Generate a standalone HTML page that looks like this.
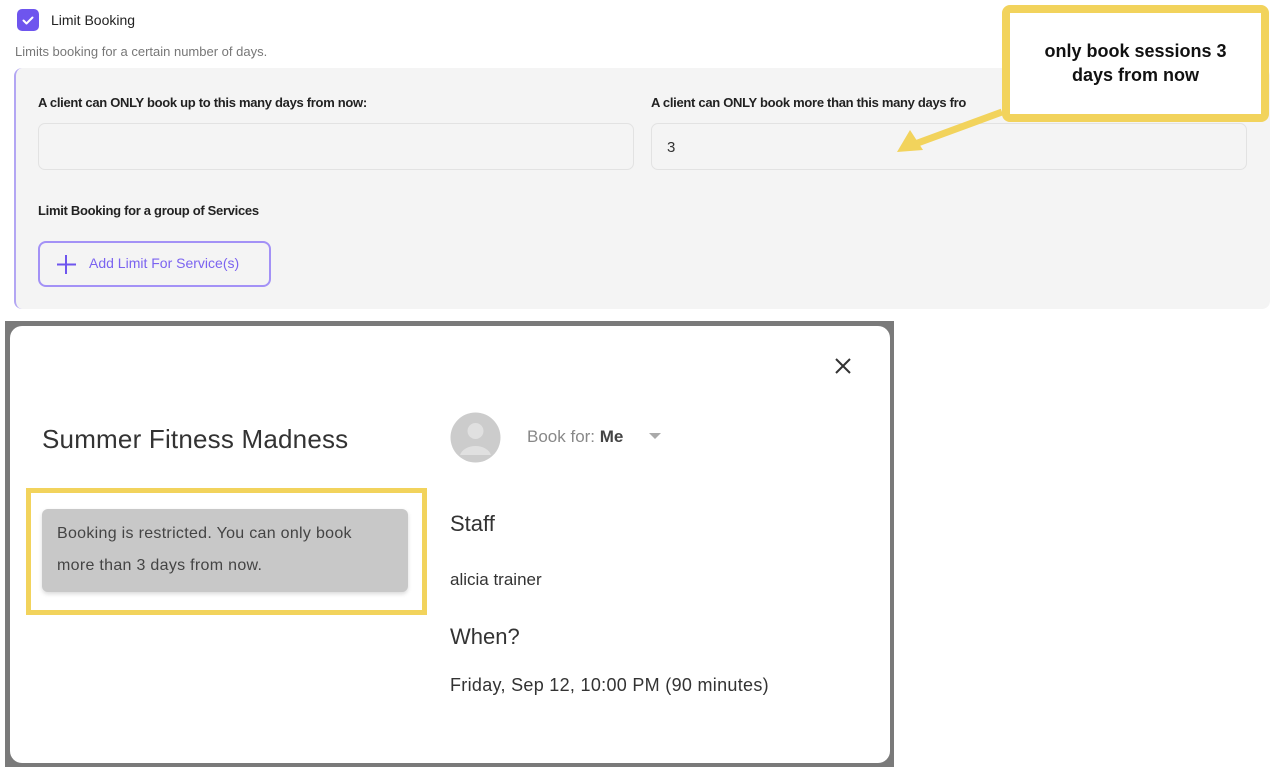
<!DOCTYPE html>
<html><head><meta charset="utf-8"><style>
*{margin:0;padding:0;box-sizing:border-box}
body{width:1285px;height:768px;background:#fff;position:relative;overflow:hidden;font-family:"Liberation Sans",sans-serif}
.a{position:absolute;white-space:nowrap}
</style></head><body>
<div class="a" style="left:17px;top:9px;width:22px;height:22px;background:#6e55ee;border-radius:5px"></div>
<svg class="a" style="left:17px;top:9px" width="22" height="22"><path d="M6.5 11.5l3 3 6-6" stroke="#fff" stroke-width="2" fill="none" stroke-linecap="round" stroke-linejoin="round"/></svg>
<div class="a" style="left:51px;top:12px;font-size:14px;color:#222">Limit Booking</div>
<div class="a" style="left:15px;top:44px;font-size:13px;color:#777">Limits booking for a certain number of days.</div>
<div class="a" style="left:14px;top:68px;width:1256px;height:241px;background:#f4f4f4;border-left:2px solid #b3a6f3;border-radius:8px"></div>
<div class="a" style="left:38px;top:95px;font-size:13px;color:#222;font-weight:bold;letter-spacing:-0.3px">A client can ONLY book up to this many days from now:</div>
<div class="a" style="left:651px;top:95px;font-size:13px;color:#222;font-weight:bold;letter-spacing:-0.3px">A client can ONLY book more than this many days fro</div>
<div class="a" style="left:38px;top:123px;width:596px;height:47px;border:1px solid #e2e2e2;border-radius:7px;background:#f4f4f4"></div>
<div class="a" style="left:651px;top:123px;width:596px;height:47px;border:1px solid #e2e2e2;border-radius:7px;background:#f4f4f4"></div>
<div class="a" style="left:667px;top:139px;font-size:15px;color:#333">3</div>
<div class="a" style="left:38px;top:203px;font-size:13px;color:#222;font-weight:bold;letter-spacing:-0.3px">Limit Booking for a group of Services</div>
<div class="a" style="left:38px;top:241px;width:233px;height:46px;border:2px solid #a391f6;border-radius:8px"></div>
<svg class="a" style="left:55px;top:253px" width="22" height="22"><path d="M11 2v19M2 11.5h19" stroke="#6e55ee" stroke-width="2"/></svg>
<div class="a" style="left:89px;top:255px;font-size:14px;color:#7b63f0">Add Limit For Service(s)</div>
<div class="a" style="left:1002px;top:5px;width:267px;height:117px;border:8px solid #f2d35c;border-radius:8px;background:#fff"></div>
<div class="a" style="left:1010px;top:39px;width:251px;text-align:center;font-size:18px;font-weight:bold;color:#111;line-height:24px;white-space:normal">only book sessions 3<br>days from now</div>
<svg class="a" style="left:890px;top:108px" width="120" height="50"><path d="M112 4L25 36" stroke="#f2d35c" stroke-width="7"/><path d="M7 44L20 22 33 42Z" fill="#f2d35c"/></svg>
<div class="a" style="left:5px;top:321px;width:889px;height:446px;background:#7a7a7a"></div>
<div class="a" style="left:10px;top:326px;width:880px;height:437px;background:#fff;border-radius:12px"></div>
<svg class="a" style="left:834px;top:357px" width="18" height="18"><path d="M2 2l14 14M16 2L2 16" stroke="#333" stroke-width="2"/></svg>
<div class="a" style="left:42px;top:424px;font-size:26px;color:#333;letter-spacing:0.2px">Summer Fitness Madness</div>
<svg class="a" style="left:450px;top:412px" width="51" height="51"><circle cx="25.5" cy="25.5" r="25" fill="#ccc"/><circle cx="25.5" cy="19" r="8" fill="#e0e0e0"/><path d="M10 43a16 12 0 0 1 31 0" fill="#e0e0e0"/></svg>
<div class="a" style="left:527px;top:427px;font-size:17px;color:#888">Book for: <b style="color:#444">Me</b></div>
<svg class="a" style="left:648px;top:432px" width="14" height="8"><path d="M1 1h12L7 7z" fill="#aaa"/></svg>
<div class="a" style="left:26px;top:488px;width:401px;height:127px;border:5px solid #f2d35c"></div>
<div class="a" style="left:42px;top:509px;width:366px;height:83px;background:#c8c8c8;border-radius:6px;box-shadow:0 2px 4px rgba(0,0,0,.15)"></div>
<div class="a" style="left:57px;top:518px;font-size:16px;color:#444;line-height:32px;letter-spacing:0.3px">Booking is restricted. You can only book<br>more than 3 days from now.</div>
<div class="a" style="left:450px;top:511px;font-size:22px;color:#333">Staff</div>
<div class="a" style="left:450px;top:570px;font-size:17px;color:#333">alicia trainer</div>
<div class="a" style="left:450px;top:624px;font-size:22px;color:#333">When?</div>
<div class="a" style="left:450px;top:675px;font-size:18px;color:#333;letter-spacing:0.3px">Friday, Sep 12, 10:00 PM (90 minutes)</div>
</body></html>
